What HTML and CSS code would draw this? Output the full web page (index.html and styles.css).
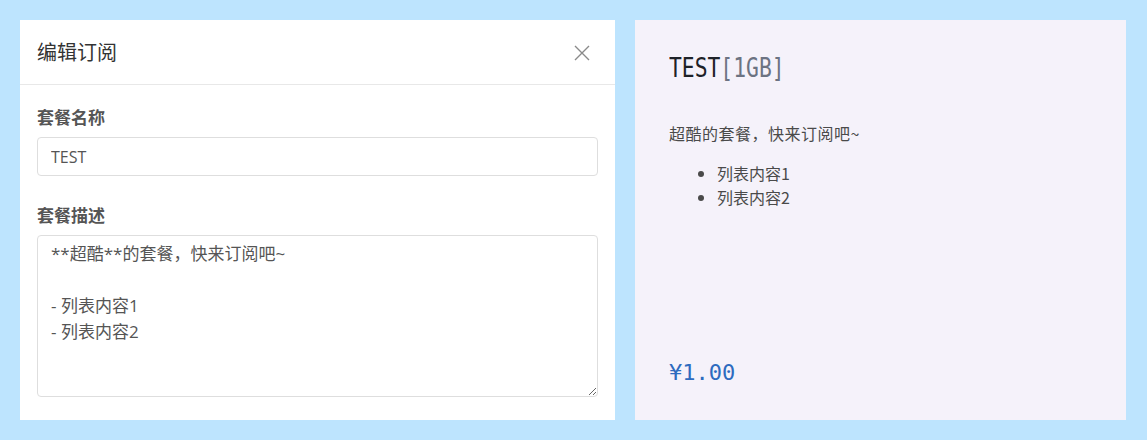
FILE: index.html
```html
<!DOCTYPE html>
<html lang="zh-CN">
<head>
<meta charset="utf-8">
<title>编辑订阅</title>
<link rel="stylesheet" href="styles.css">
</head>
<body>
<div class="page">
  <section class="editor">
    <header class="editor-head">
      <h2 class="editor-title">编辑订阅</h2>
      <button class="close" type="button" aria-label="关闭">
        <svg width="16" height="16" viewBox="0 0 16 16"><path d="M1 1L15 15M15 1L1 15" stroke="#8a8a8a" stroke-width="1.4" fill="none"/></svg>
      </button>
    </header>
    <div class="editor-body">
      <label class="field-label">套餐名称</label>
      <input class="field-input" type="text" value="TEST">
      <label class="field-label second">套餐描述</label>
      <textarea class="field-area">**超酷**的套餐，快来订阅吧~

- 列表内容1
- 列表内容2</textarea>
    </div>
  </section>
  <section class="preview">
    <h1 class="plan-title"><span class="plan-name">TEST</span><span class="plan-size">[1GB]</span></h1>
    <p class="plan-desc">超酷的套餐，快来订阅吧~</p>
    <ul class="plan-list">
      <li>列表内容1</li>
      <li>列表内容2</li>
    </ul>
    <div class="plan-price">¥1.00</div>
  </section>
</div>
</body>
</html>
```
FILE: styles.css
```css
html, body {
  margin: 0;
  padding: 0;
}
body {
  background: #bde4fe;
  font-family: "Open Sans", "Noto Sans CJK SC", sans-serif;
}
.page {
  display: flex;
  gap: 20px;
  padding: 20px 21px 20px 20px;
  height: 400px;
}
.editor {
  width: 595px;
  background: #ffffff;
  display: flex;
  flex-direction: column;
}
.editor-head {
  box-sizing: border-box;
  height: 65px;
  border-bottom: 1px solid #e8e8e8;
  display: flex;
  align-items: center;
  justify-content: space-between;
  padding: 2px 25px 0 17px;
}
.editor-title {
  margin: 0;
  font-size: 20px;
  font-weight: 400;
  color: #333333;
  line-height: 28px;
}
.close {
  border: 0;
  background: none;
  padding: 0;
  width: 16px;
  height: 16px;
  display: flex;
}
.editor-body {
  display: flex;
  flex-direction: column;
  padding: 21px 17px 0 17px;
}
.field-label {
  font-size: 17px;
  font-weight: 700;
  color: #555555;
  line-height: 24px;
  margin-bottom: 7px;
}
.field-label.second {
  margin-top: 28px;
}
.field-input {
  box-sizing: border-box;
  height: 39px;
  border: 1px solid #dedede;
  border-radius: 4px;
  padding: 0 13px;
  font-family: "Open Sans", "Noto Sans CJK SC", sans-serif;
  font-size: 16px;
  color: #555555;
  outline: none;
}
.field-area {
  box-sizing: border-box;
  height: 162px;
  border: 1px solid #dedede;
  border-radius: 4px;
  padding: 5px 13px;
  font-family: "Open Sans", "Noto Sans CJK SC", sans-serif;
  font-size: 17px;
  line-height: 26px;
  color: #555555;
  outline: none;
  resize: vertical;
}
.preview {
  flex: 1;
  background: #f5f2fa;
  display: flex;
  flex-direction: column;
  padding: 28px 34px 32px 34px;
  font-family: "DejaVu Sans Mono", "Noto Sans CJK SC", monospace;
  color: #4a4a4a;
}
.plan-title {
  margin: 0;
  font-size: 27px;
  font-weight: 400;
  line-height: 40px;
  white-space: nowrap;
  display: inline-block;
  transform: scaleX(0.79);
  transform-origin: left center;
}
.plan-name {
  color: #1e2228;
}
.plan-size {
  color: #6c7382;
}
.plan-desc {
  margin: 33px 0 16px 0;
  font-size: 16px;
  line-height: 24px;
  letter-spacing: 0.5px;
  font-family: "Noto Sans CJK SC", sans-serif;
}
.plan-list {
  margin: 0;
  padding-left: 48px;
  font-size: 16px;
  line-height: 24px;
  font-family: "Noto Sans CJK SC", sans-serif;
}
.plan-price {
  margin-top: auto;
  font-size: 22px;
  line-height: 30px;
  color: #2d6bbf;
}
```
